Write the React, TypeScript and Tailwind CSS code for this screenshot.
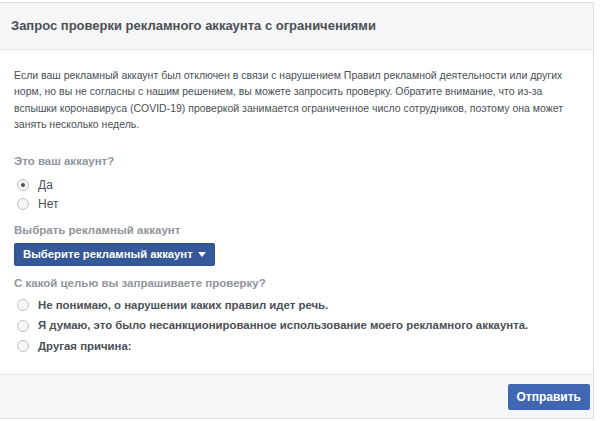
import React, { useState } from 'react';

const Radio = ({ checked }: { checked?: boolean }) => (
  <span className="w-[12px] h-[12px] rounded-full border border-[#bec3c9] bg-[#f5f6f7] flex items-center justify-center shrink-0">
    {checked && <span className="w-[4px] h-[4px] rounded-full bg-[#4b4f56]" />}
  </span>
);

const App: React.FC = () => {
  const [owner, setOwner] = useState('yes');
  const [reason, setReason] = useState('');

  const reasons = [
    { id: 'unclear', label: 'Не понимаю, о нарушении каких правил идет речь.' },
    { id: 'unauthorized', label: 'Я думаю, это было несанкционированное использование моего рекламного аккаунта.' },
    { id: 'other', label: 'Другая причина:' },
  ];

  return (
    <div className="w-[600px] h-[421px] bg-white pt-[2px] font-['Liberation_Sans',Arial,sans-serif]">
      <div className="w-[594px] h-[417px] border border-l-0 border-[#dddfe2] flex flex-col">
        {/* Header */}
        <div className="h-[47px] bg-[#f5f6f7] border-b border-[#e5e5e5] px-[11px] flex items-center">
          <h2 className="text-[13px] font-bold text-[#4b4f56]">Запрос проверки рекламного аккаунта с ограничениями</h2>
        </div>

        {/* Body */}
        <div className="flex-1 px-[14px] pt-[17px]">
          <p className="text-[10.5px] leading-[16.3px] text-[#4b4f56]">
            Если ваш рекламный аккаунт был отключен в связи с нарушением Правил рекламной деятельности или других норм, но вы не согласны с нашим решением, вы можете запросить проверку. Обратите внимание, что из-за вспышки коронавируса (COVID-19) проверкой занимается ограниченное число сотрудников, поэтому она может занять несколько недель.
          </p>

          <div className="mt-[21px] text-[11.5px] font-bold text-[#90949c] leading-[16px]">Это ваш аккаунт?</div>
          <div className="mt-[6px] flex flex-col">
            {[
              { id: 'yes', label: 'Да' },
              { id: 'no', label: 'Нет' },
            ].map((o) => (
              <button
                key={o.id}
                onClick={() => setOwner(o.id)}
                className="h-[19px] flex items-center gap-[9px] pl-[3px] text-[12px] text-[#4b4f56]"
              >
                <Radio checked={owner === o.id} />
                <span>{o.label}</span>
              </button>
            ))}
          </div>

          <div className="mt-[9px] text-[11.5px] font-bold text-[#90949c] leading-[16px]">Выбрать рекламный аккаунт</div>
          <button className="mt-[5px] h-[23px] px-[8px] rounded-[2px] bg-[#365899] border border-[#2f4f8a] text-white text-[11.3px] font-bold flex items-center gap-[5px]">
            Выберите рекламный аккаунт
            <svg width="8" height="5" viewBox="0 0 8 5">
              <path d="M0 0 L8 0 L4 5 Z" fill="white" />
            </svg>
          </button>

          <div className="mt-[9px] text-[11.5px] font-bold text-[#90949c] leading-[16px]">С какой целью вы запрашиваете проверку?</div>
          <div className="mt-[4px] flex flex-col">
            {reasons.map((r) => (
              <button
                key={r.id}
                onClick={() => setReason(r.id)}
                className="h-[20.5px] flex items-center gap-[9px] pl-[3px] text-[11.4px] font-bold text-[#4b4f56] text-left"
              >
                <Radio checked={reason === r.id} />
                <span>{r.label}</span>
              </button>
            ))}
          </div>
        </div>

        {/* Footer */}
        <div className="h-[44px] bg-[#f5f6f7] border-t border-[#e5e5e5] flex items-center justify-end pr-[3px]">
          <button className="h-[26px] px-[8px] rounded-[2px] bg-[#4267b2] border border-[#4267b2] text-white text-[12px] font-bold">
            Отправить
          </button>
        </div>
      </div>
    </div>
  );
};

export default App;
